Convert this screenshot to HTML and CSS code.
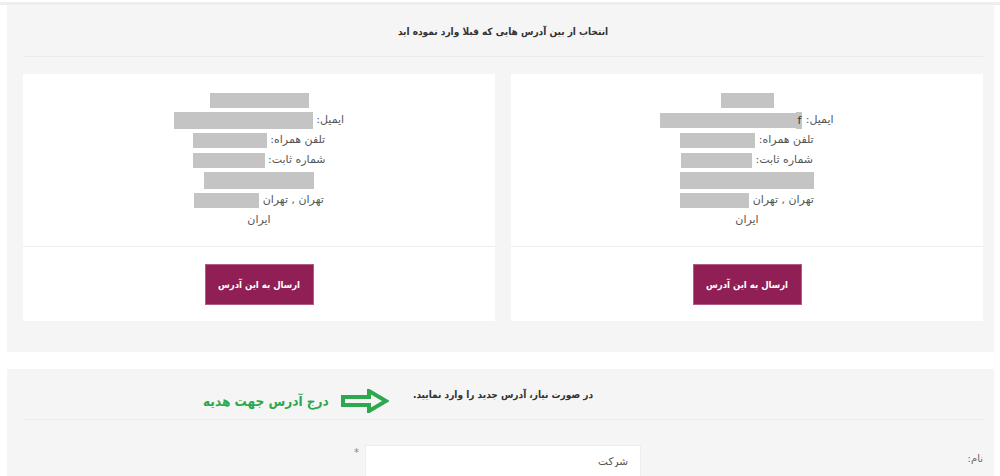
FILE: index.html
```html
<!DOCTYPE html>
<html lang="fa" dir="rtl">
<head>
    <meta charset="UTF-8">
    <meta name="viewport" content="width=device-width, initial-scale=1.0">
    <title>آدرس ارسال</title>
    <link rel="stylesheet" href="styles.css">
</head>
<body>
    <div class="topline"></div>

    <!-- آدرس های قبلی -->
    <div class="box box-old">
        <div class="box-title">انتخاب از بین آدرس هایی که قبلا وارد نموده اید</div>
        <div class="cards">
            <div class="card">
                <div class="card-body">
                    <div class="row"><span class="hide" style="width:53px"></span></div>
                    <div class="row">ایمیل: <span class="chr">f</span><span class="hide" style="width:136px"></span></div>
                    <div class="row">تلفن همراه: <span class="hide" style="width:75px"></span></div>
                    <div class="row">شماره ثابت: <span class="hide" style="width:71px"></span></div>
                    <div class="row"><span class="hide tall" style="width:134px"></span></div>
                    <div class="row">تهران , تهران <span class="hide" style="width:69px"></span></div>
                    <div class="row">ایران</div>
                </div>
                <div class="card-foot"><a class="btn" href="#">ارسال به این آدرس</a></div>
            </div>
            <div class="card">
                <div class="card-body">
                    <div class="row"><span class="hide" style="width:99px"></span></div>
                    <div class="row">ایمیل: <span class="hide tall" style="width:139px"></span></div>
                    <div class="row">تلفن همراه: <span class="hide" style="width:74px"></span></div>
                    <div class="row">شماره ثابت: <span class="hide" style="width:72px"></span></div>
                    <div class="row"><span class="hide tall" style="width:110px"></span></div>
                    <div class="row">تهران , تهران <span class="hide" style="width:65px"></span></div>
                    <div class="row">ایران</div>
                </div>
                <div class="card-foot"><a class="btn" href="#">ارسال به این آدرس</a></div>
            </div>
        </div>
    </div>

    <!-- آدرس جدید -->
    <div class="box box-new">
        <div class="box-title">در صورت نیاز، آدرس جدید را وارد نمایید.</div>
        <div class="note">
            <svg class="arrow" width="48" height="24" viewBox="0 0 48 24">
                <path d="M2 8 H28 V2 L45 12 L28 22 V16 H2 Z" fill="#f5f5f5" stroke="#2ea84f" stroke-width="4" stroke-linejoin="miter"/>
            </svg>
            <span>درج آدرس جهت هدیه</span>
        </div>
        <div class="form-row">
            <label class="lbl">نام:</label>
            <div class="field">
                <input type="text" value="شرکت">
                <span class="req">*</span>
            </div>
        </div>
    </div>
</body>
</html>
```

FILE: styles.css
```css
*{margin:0; padding:0; box-sizing:border-box;}
a{text-decoration:none;}
html,body{height:100%;}

body{
    background:#fff;
    font-family:"DejaVu Sans", Tahoma, sans-serif;
    font-size:11px;
    color:#555;
    overflow:hidden;
}
.topline{
    height:3px;
    margin-top:2px;
    background:#eeeeee;
}
.box{
    position:relative;
    margin:0 6px 0 7px;
    background:#f5f5f5;
}
.box-old{
    padding:0 11px 31px 16px;
}
.box-title{
    height:52px;
    line-height:54px;
    text-align:center;
    font-family:"DejaVu Sans Condensed", "DejaVu Sans", sans-serif;
    font-size:10px;
    font-weight:bold;
    color:#333;
    border-bottom:1px solid #ebebeb;
}
.cards{
    display:flex;
    gap:16px;
    margin-top:17px;
}
.card{
    width:472px;
    background:#fff;
}
.card-body{
    height:173px;
    padding-top:16px;
    border-bottom:1px solid #eeeeee;
    text-align:center;
}
.row{
    height:20px;
    line-height:20px;
    font-size:11px;
    color:#555;
}
.hide{
    display:inline-block;
    height:15px;
    vertical-align:middle;
    background:#c4c4c4;
}
.hide.tall{height:17px;}
.chr{
    display:inline-block;
    height:17px;
    line-height:17px;
    padding:0 1px;
    vertical-align:middle;
    background:#c4c4c4;
    color:#333;
}
.card-foot{
    height:74px;
    padding-top:17px;
    text-align:center;
}
.btn{
    display:inline-block;
    width:109px;
    height:41px;
    line-height:40px;
    background:#901f55;
    color:#fff;
    font-family:"DejaVu Sans Condensed", "DejaVu Sans", sans-serif;
    font-size:9.5px;
    font-weight:bold;
    border:1px solid #b35a85;
}

.box-new{
    margin-top:17px;
    height:120px;
    padding:0 11px 0 16px;
}
.box-new .box-title{
    height:51px;
    line-height:52px;
}
.note{
    position:absolute;
    left:196px;
    top:20px;
    display:flex;
    align-items:center;
    gap:12px;
    color:#2ea84f;
    font-family:"DejaVu Sans Condensed", "DejaVu Sans", sans-serif;
    font-size:13.5px;
    font-weight:bold;
}
.arrow{display:block;}
.form-row{
    display:flex;
    align-items:flex-start;
    padding-top:25px;
}
.lbl{
    width:342px;
    padding-top:8px;
    font-size:10px;
    color:#666;
}
.field{
    position:relative;
    display:flex;
    gap:6px;
}
.field input{
    width:276px;
    height:32px;
    border:1px solid #eee;
    background:#fff;
    padding:0 12px;
    font-family:"DejaVu Sans", Tahoma, sans-serif;
    font-size:10.5px;
    color:#555;
    direction:rtl;
    outline:none;
}
.req{
    padding-top:2px;
    color:#888;
    font-size:10px;
}
```
